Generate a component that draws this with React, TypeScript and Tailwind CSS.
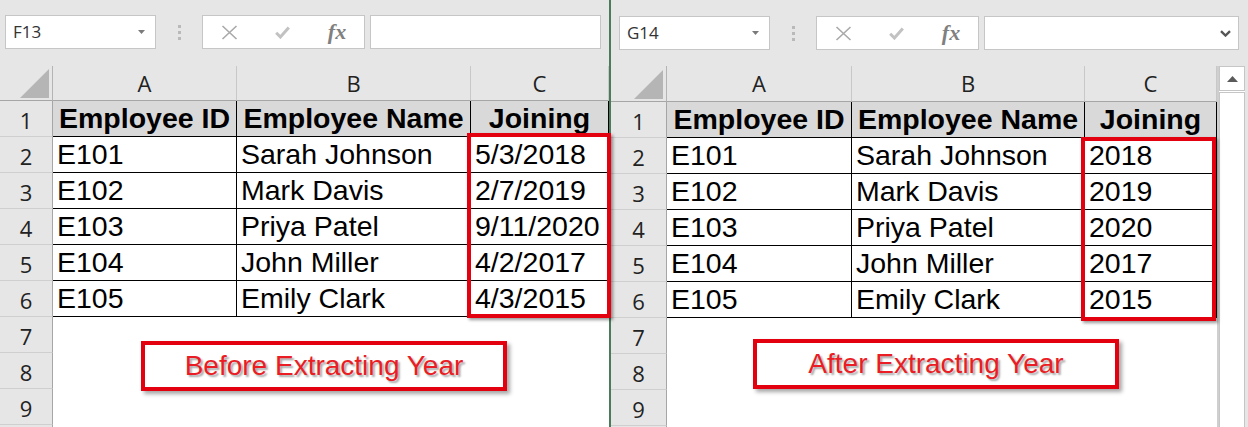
import React from "react";

const data: [string, string, string, string][] = [
  ["E101", "Sarah Johnson", "5/3/2018", "2018"],
  ["E102", "Mark Davis", "2/7/2019", "2019"],
  ["E103", "Priya Patel", "9/11/2020", "2020"],
  ["E104", "John Miller", "4/2/2017", "2017"],
  ["E105", "Emily Clark", "4/3/2015", "2015"],
];

const ARIAL = "[font-family:'Liberation_Sans',Arial,sans-serif]";
const UI = "[font-family:'Open_Sans','Noto_Sans',sans-serif]";

function DropArrow() {
  return (
    <svg width="7" height="4" viewBox="0 0 7 4">
      <path d="M0 0H7L3.5 4Z" fill="#7a7a7a" />
    </svg>
  );
}

function NameBox({ name }: { name: string }) {
  return (
    <div className="w-[151px] h-[34px] bg-white border border-[#c6c6c6] flex items-center justify-between pl-[7px] pr-[10px]">
      <span className={`text-[17px] text-[#333] ${UI}`}>{name}</span>
      <DropArrow />
    </div>
  );
}

function Dots() {
  return (
    <div className="w-[46px] h-[34px] flex flex-col items-center justify-center gap-[3px]">
      <div className="w-[3px] h-[3px] bg-[#b9b9b9]" />
      <div className="w-[3px] h-[3px] bg-[#b9b9b9]" />
      <div className="w-[3px] h-[3px] bg-[#b9b9b9]" />
    </div>
  );
}

function FxBox() {
  return (
    <div className="w-[163px] h-[34px] bg-white border border-[#c6c6c6] flex items-center">
      <div className="w-[53px] flex justify-center">
        <svg width="17" height="15" viewBox="0 0 17 15">
          <path d="M1.5 1L15.5 14M15.5 1L1.5 14" stroke="#a9a9a9" strokeWidth="1.6" fill="none" />
        </svg>
      </div>
      <div className="w-[53px] flex justify-center">
        <svg width="15" height="13" viewBox="0 0 15 13">
          <path d="M1.2 6.8L5.4 11L13.8 1.5" stroke="#c2c2c2" strokeWidth="3" fill="none" />
        </svg>
      </div>
      <div className="w-[53px] flex justify-center pl-[3px]">
        <span className="[font-family:'Liberation_Serif','Times_New_Roman',serif] italic font-bold text-[22px] leading-none text-[#808080]">
          fx
        </span>
      </div>
    </div>
  );
}

type SheetProps = {
  gridClass: string;
  useYear: boolean;
};

function Sheet({ gridClass, useYear }: SheetProps) {
  const cells: React.ReactNode[] = [];
  cells.push(
    <div
      key="corner"
      className="bg-[#e6e6e6] border-r border-b border-r-[#b4b4b4] border-b-[#a6a6a6] flex items-end justify-end pr-[3px] pb-[2px]"
    >
      <svg width="29" height="29" viewBox="0 0 29 29">
        <path d="M29 0V29H0Z" fill="#b5b5b5" />
      </svg>
    </div>
  );
  ["A", "B", "C"].forEach((l) =>
    cells.push(
      <div
        key={"h" + l}
        className={`bg-[#e6e6e6] border-r border-b border-r-[#c8c8c8] border-b-[#a6a6a6] flex items-center justify-center text-[22px] text-[#222] ${UI}`}
      >
        {l}
      </div>
    )
  );
  for (let r = 1; r <= 10; r++) {
    cells.push(
      <div
        key={"r" + r}
        className={`bg-[#e6e6e6] border-r border-b border-r-[#a6a6a6] border-b-[#cfcfcf] flex items-center justify-center pt-[3px] text-[22px] text-[#222] ${UI}`}
      >
        {r <= 9 ? r : ""}
      </div>
    );
    if (r === 1) {
      ["Employee ID", "Employee Name", "Joining"].forEach((t, i) =>
        cells.push(
          <div
            key={"c1" + i}
            className={`bg-[#d9d9d9] border-r border-b border-black font-bold text-[28.5px] text-black whitespace-nowrap flex items-center justify-center ${ARIAL}`}
          >
            {t}
          </div>
        )
      );
    } else if (r <= 6) {
      const d = data[r - 2];
      [d[0], d[1], useYear ? d[3] : d[2]].forEach((t, i) =>
        cells.push(
          <div
            key={"c" + r + i}
            className={`bg-white border-r border-b border-black text-[28.5px] text-black whitespace-nowrap flex items-center pl-[4px] ${ARIAL}`}
          >
            {t}
          </div>
        )
      );
    } else {
      [0, 1, 2].forEach((i) => cells.push(<div key={"c" + r + i} className="bg-white" />));
    }
  }
  return <div className={`grid shrink-0 ${gridClass}`}>{cells}</div>;
}

export default function App() {
  return (
    <div className="relative w-[1248px] h-[427px] overflow-hidden bg-white flex">
      {/* Left window */}
      <div className="w-[609px] shrink-0 flex flex-col">
        <div className="h-[66px] shrink-0 bg-[#e6e6e6] flex items-start pt-[15px] pl-[5px]">
          <NameBox name="F13" />
          <Dots />
          <FxBox />
          <div className="ml-[5px] w-[231px] h-[34px] bg-white border border-[#c6c6c6]" />
        </div>
        <Sheet gridClass="grid-cols-[53px_184px_234px_138px] grid-rows-[35px_repeat(10,36px)]" useYear={false} />
      </div>

      {/* Divider */}
      <div className="w-[2px] shrink-0 bg-[#4a7c5c]" />

      {/* Right window */}
      <div className="w-[637px] shrink-0 flex flex-col">
        <div className="h-[66px] shrink-0 bg-[#e6e6e6] flex items-start pt-[16px] pl-[8px]">
          <NameBox name="G14" />
          <Dots />
          <FxBox />
          <div className="ml-[5px] w-[255px] h-[34px] bg-white border border-[#c6c6c6] flex items-center justify-end pr-[7px]">
            <svg width="11" height="7" viewBox="0 0 11 7">
              <path d="M1 1.2L5.5 5.5L10 1.2" stroke="#555" strokeWidth="2.4" fill="none" />
            </svg>
          </div>
        </div>
        <div className="flex">
          <Sheet gridClass="grid-cols-[56px_185px_233px_132px] grid-rows-[36px_repeat(10,36px)]" useYear={true} />
          <div className="w-[31px] flex bg-white">
            <div className="w-[2px] bg-[#cfcfcf]" />
            <div className="w-[26px] flex flex-col">
              <div className="h-[25px] bg-white border border-[#c6c6c6] flex items-center justify-center">
                <svg width="11" height="6" viewBox="0 0 11 6">
                  <path d="M0 6L5.5 0L11 6Z" fill="#5a5a5a" />
                </svg>
              </div>
              <div className="flex-1 mt-[1px] bg-white border border-[#c6c6c6]" />
            </div>
            <div className="w-[3px] bg-[#e6e6e6]" />
          </div>
        </div>
      </div>

      {/* Highlight boxes */}
      <div className="absolute left-[467px] top-[133px] w-[144px] h-[185px] border-4 border-[#e3000f] shadow-[2px_2px_3px_rgba(0,0,0,0.4)]" />
      <div className="absolute left-[1081px] top-[137px] w-[135px] h-[184px] border-4 border-[#e3000f] shadow-[2px_2px_3px_rgba(0,0,0,0.4)]" />

      {/* Labels */}
      <div className="absolute left-[141px] top-[341px] w-[366px] h-[50px] border-4 border-[#e3000f] bg-white shadow-[3px_3px_4px_rgba(0,0,0,0.35)] flex items-center justify-center">
        <span className={`text-[28px] leading-none text-[#ea1c24] whitespace-nowrap [text-shadow:2px_2px_2px_rgba(0,0,0,0.35)] ${ARIAL}`}>
          Before Extracting Year
        </span>
      </div>
      <div className="absolute left-[753px] top-[339px] w-[366px] h-[50px] border-4 border-[#e3000f] bg-white shadow-[3px_3px_4px_rgba(0,0,0,0.35)] flex items-center justify-center">
        <span className={`text-[28px] leading-none text-[#ea1c24] whitespace-nowrap [text-shadow:2px_2px_2px_rgba(0,0,0,0.35)] ${ARIAL}`}>
          After Extracting Year
        </span>
      </div>
    </div>
  );
}
